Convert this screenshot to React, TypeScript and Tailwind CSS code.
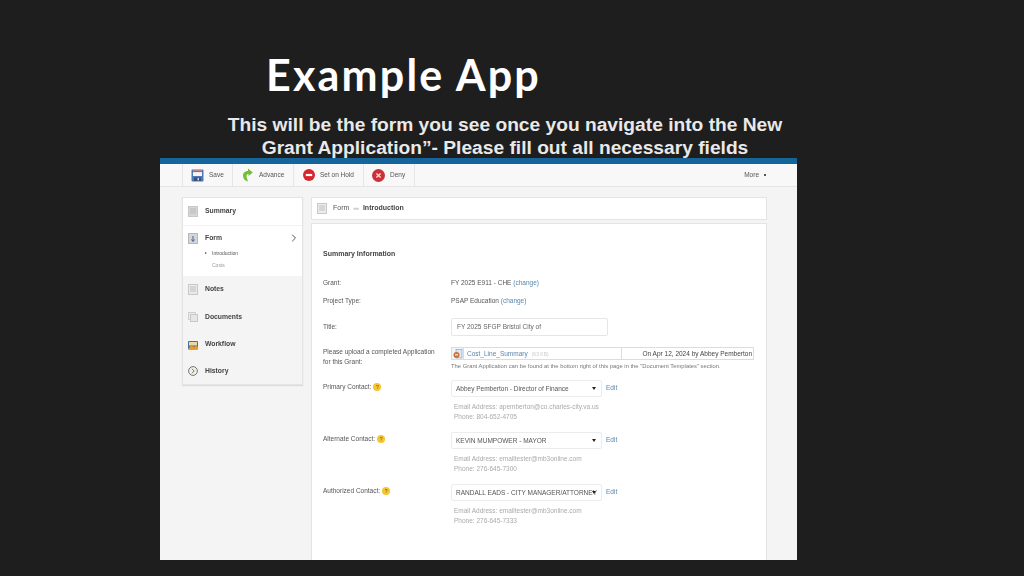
import { ChevronRight } from "lucide-react";

const sans = "font-['Liberation_Sans',Arial,sans-serif]";

function SaveIcon() {
  return (
    <svg width="13" height="13" viewBox="0 0 13 13">
      <rect x="0.5" y="0.5" width="12" height="12" rx="1" fill="#4f78b4" />
      <rect x="2" y="1.5" width="9" height="5.5" fill="#f4f4f4" />
      <rect x="2" y="1.5" width="9" height="1.6" fill="#d9534f" />
      <rect x="3" y="8.5" width="7" height="3.5" fill="#33507f" />
      <rect x="6.5" y="9" width="1.5" height="2.5" fill="#c9d4e4" />
    </svg>
  );
}

function AdvanceIcon() {
  return (
    <svg width="11" height="14" viewBox="0 0 11 14">
      <path d="M6 0.5 L10.8 4.5 L6.5 8 L6.5 6 C4.5 6 4 8 5 10.5 L6 13.5 C3 13 1 10.5 1 7.5 C1 4.5 3.5 3 6 3 Z" fill="#74bd38" />
    </svg>
  );
}

function HoldIcon() {
  return (
    <svg width="12" height="12" viewBox="0 0 12 12">
      <circle cx="6" cy="6" r="6" fill="#d8262c" />
      <rect x="2.8" y="4.9" width="6.4" height="2.2" fill="#fff" />
    </svg>
  );
}

function DenyIcon() {
  return (
    <svg width="13" height="13" viewBox="0 0 13 13">
      <circle cx="6.5" cy="6.5" r="6.5" fill="#cf3038" />
      <path d="M4.4 4.4 L8.6 8.6 M8.6 4.4 L4.4 8.6" stroke="#f6dada" strokeWidth="1.4" />
    </svg>
  );
}

function PageIcon({ tone = "#d6d6d6" }: { tone?: string }) {
  return (
    <svg width="10" height="11" viewBox="0 0 10 11">
      <rect x="0.5" y="0.5" width="9" height="10" fill={tone} stroke="#c8c8c8" />
      <path d="M2 3 H8 M2 5 H8 M2 7 H8" stroke="#b0b0b0" strokeWidth="0.7" />
    </svg>
  );
}

function FormIcon() {
  return (
    <svg width="10" height="11" viewBox="0 0 10 11">
      <rect x="0.5" y="0.5" width="9" height="10" fill="#d4d6dc" stroke="#b5b7bf" />
      <path d="M5 3 V8 M3.5 6.5 L5 8.5 L6.5 6.5" stroke="#4a5f8f" strokeWidth="1" fill="none" />
    </svg>
  );
}

function DocsIcon() {
  return (
    <svg width="10" height="10" viewBox="0 0 10 10">
      <rect x="0.5" y="0.5" width="7" height="7" fill="#ececec" stroke="#cfcfcf" />
      <rect x="2.5" y="2.5" width="7" height="7" fill="#e6e6e6" stroke="#c8c8c8" />
    </svg>
  );
}

function WorkflowIcon() {
  return (
    <svg width="10" height="10" viewBox="0 0 10 10">
      <rect x="0" y="1" width="10" height="8.5" rx="1" fill="#4a6fa0" />
      <rect x="1" y="2" width="8" height="3.5" fill="#e8d9a8" />
      <path d="M0 9.5 L3 5 L6 7 L8 5.5 L10 7 V9.5 Z" fill="#e39a2d" />
    </svg>
  );
}

function HistoryIcon() {
  return (
    <svg width="10" height="10" viewBox="0 0 10 10">
      <circle cx="5" cy="5" r="4.4" fill="#eee" stroke="#77776b" strokeWidth="1" />
      <path d="M4 2.8 L6.2 5 L4 7.2" fill="none" stroke="#8a7a3a" strokeWidth="1" />
    </svg>
  );
}

function FileIcon() {
  return (
    <svg width="10" height="10" viewBox="0 0 10 10">
      <rect x="3" y="0.5" width="6" height="8.5" fill="#dfe7f2" stroke="#7f9bc4" strokeWidth="0.6" />
      <circle cx="3.5" cy="6" r="3" fill="#c9713c" />
      <rect x="2" y="5" width="3" height="1.5" fill="#f0d8c4" />
    </svg>
  );
}

function Hint({ n }: { n: string }) {
  return (
    <span className="ml-[2px] flex size-[8px] items-center justify-center rounded-full bg-[#f7c531] text-[5px] leading-none text-[#6b5210]">
      {n}
    </span>
  );
}

function ToolItem({ icon, label, width }: { icon: React.ReactNode; label: string; width: string }) {
  return (
    <div className={`flex h-full items-center border-r border-[#e6e6e6] pl-[8px] ${width}`}>
      <span className="flex w-[13px] justify-center">{icon}</span>
      <span className="ml-[5px] text-[6.5px] text-[#555]">{label}</span>
    </div>
  );
}

function SideRow({ icon, label, className }: { icon: React.ReactNode; label: string; className: string }) {
  return (
    <div className={`flex items-center pl-[5px] ${className}`}>
      <span className="flex w-[10px] justify-center">{icon}</span>
      <span className="ml-[7px] text-[6.8px] font-bold text-[#444]">{label}</span>
    </div>
  );
}

function Contact({
  label,
  hint,
  selected,
  email,
  phone,
  className,
}: {
  label: string;
  hint: string;
  selected: string;
  email: string;
  phone: string;
  className: string;
}) {
  return (
    <div className={`flex ${className}`}>
      <div className="mt-[1px] flex h-[12px] w-[128px] items-center text-[#555]">
        {label}
        <Hint n={hint} />
      </div>
      <div>
        <div className="flex items-center">
          <div className="flex h-[17px] w-[151px] items-center justify-between rounded-[2px] border border-[#ececec] bg-white pl-[4px] pr-[5px] text-[#555]">
            <span className="whitespace-nowrap">{selected}</span>
            <span className="ml-[-6px] h-0 w-0 border-x-[2.5px] border-t-[3px] border-x-transparent border-t-[#222]" />
          </div>
          <span className="ml-[4px] mt-[-1px] text-[#5a86ad]">Edit</span>
        </div>
        <div className="ml-[3px] mt-[5px] text-[#aaa]">Email Address: {email}</div>
        <div className="ml-[3px] text-[#aaa]">Phone: {phone}</div>
      </div>
    </div>
  );
}

export default function App() {
  return (
    <div className={`flex h-[576px] w-[1024px] flex-col overflow-hidden bg-[#1e1e1f] pb-[16px] pl-[160px] ${sans}`}>
      <div className="h-[158px] shrink-0 pt-[50px]">
        <h1 className="ml-[106px] font-['Lato',sans-serif] text-[43px] font-bold leading-[50px] tracking-[2.2px] text-white">
          Example App
        </h1>
        <p className="ml-[48px] mt-[13px] w-[594px] whitespace-nowrap text-center text-[19.2px] font-bold leading-[23px] text-[#e9e9e9]">
          This will be the form you see once you navigate into the New
          <br />
          Grant Application”- Please fill out all necessary fields
        </p>
      </div>

      <div className="relative flex w-[637px] flex-1 flex-col overflow-hidden bg-[#f4f4f4] blur-[0.4px]">
        <div className="h-[6px] shrink-0 bg-[#14659b]" />

        <div className="flex h-[23px] shrink-0 items-center border-b border-[#e5e5e5] bg-[#f8f8f8] pl-[22px] pr-[31px]">
          <div className="flex h-full border-l border-[#e6e6e6]">
            <ToolItem icon={<SaveIcon />} label="Save" width="w-[50px]" />
            <ToolItem icon={<AdvanceIcon />} label="Advance" width="w-[61px]" />
            <ToolItem icon={<HoldIcon />} label="Set on Hold" width="w-[70px]" />
            <ToolItem icon={<DenyIcon />} label="Deny" width="w-[51px]" />
          </div>
          <div className="ml-auto flex items-center text-[6.5px] text-[#555]">
            More
            <span className="ml-[5px] size-[2px] bg-[#555]" />
          </div>
        </div>

        <div className="flex flex-1 gap-[8px] overflow-hidden pl-[22px] pt-[10px]">
          <div className="h-[188px] w-[121px] shrink-0 self-start border border-[#e4e4e4] shadow-[0_1px_1px_#ddd]">
            <SideRow icon={<PageIcon />} label="Summary" className="h-[27px] bg-white" />
            <div className="h-[51px] border-t border-[#f2f2f2] bg-white">
              <div className="flex h-[24px] items-center pl-[5px] pr-[2px]">
                <span className="flex w-[10px] justify-center">
                  <FormIcon />
                </span>
                <span className="ml-[7px] text-[6.8px] font-bold text-[#444]">Form</span>
                <ChevronRight className="ml-auto size-[12px] text-[#555]" strokeWidth={2} />
              </div>
              <div className="flex items-center pl-[22px] text-[5px] leading-[6px] text-[#555]">
                <span className="mr-[5px] text-[4px]">▸</span>Introduction
              </div>
              <div className="mt-[6px] pl-[29px] text-[5px] leading-[6px] text-[#999]">Costs</div>
            </div>
            <div className="flex h-[108px] flex-col justify-start bg-[#f4f4f4]">
              <SideRow icon={<PageIcon tone="#eaeaea" />} label="Notes" className="h-[27px]" />
              <SideRow icon={<DocsIcon />} label="Documents" className="h-[28px]" />
              <SideRow icon={<WorkflowIcon />} label="Workflow" className="h-[27px]" />
              <SideRow icon={<HistoryIcon />} label="History" className="h-[26px]" />
            </div>
          </div>

          <div className="flex w-[456px] shrink-0 flex-col gap-[3px]">
            <div className="flex h-[23px] shrink-0 items-center border border-[#e4e4e4] bg-white pl-[5px] text-[7px] text-[#555]">
              <PageIcon tone="#ececec" />
              <span className="ml-[6px]">Form</span>
              <span className="mx-[4px] text-[5px] text-[#999]">»»</span>
              <span className="font-bold text-[#444]">Introduction</span>
            </div>

            <div className="flex-1 border-x border-t border-[#e4e4e4] bg-white pl-[11px] pt-[25px] text-[6.5px] leading-[10px] text-[#555]">
              <div className="text-[7px] font-bold text-[#444]">Summary Information</div>

              <div className="mt-[19px] flex">
                <div className="w-[128px]">Grant:</div>
                <div>
                  FY 2025 E911 - CHE <span className="text-[#5a86ad]">(change)</span>
                </div>
              </div>
              <div className="mt-[8px] flex">
                <div className="w-[128px]">Project Type:</div>
                <div>
                  PSAP Education <span className="text-[#5a86ad]">(change)</span>
                </div>
              </div>

              <div className="mt-[12px] flex items-center">
                <div className="w-[128px]">Title:</div>
                <div className="flex h-[18px] w-[157px] items-center rounded-[2px] border border-[#e6e6e6] pl-[5px] text-[#666]">
                  FY 2025 SFGP Bristol City of
                </div>
              </div>

              <div className="mt-[11px] flex">
                <div className="w-[128px]">
                  Please upload a completed Application
                  <br />
                  for this Grant:
                </div>
                <div>
                  <div className="flex h-[13px] w-[303px] items-center border border-[#dcdcdc]">
                    <span className="flex h-full w-[12px] items-center justify-center border-r border-[#dcdcdc] bg-[#f1f5fa]">
                      <FileIcon />
                    </span>
                    <span className="ml-[3px] text-[#5a86ad]">Cost_Line_Summary</span>
                    <span className="ml-[4px] text-[5px] text-[#ccc]">(63 KB)</span>
                    <span className="ml-auto flex h-full w-[132px] items-center justify-end border-l border-[#dcdcdc] pr-[1px] text-[#444]">
                      On Apr 12, 2024 by Abbey Pemberton
                    </span>
                  </div>
                  <div className="mt-[2px] whitespace-nowrap text-[5.84px] leading-[8px] text-[#777]">
                    The Grant Application can be found at the bottom right of this page in the "Document Templates" section.
                  </div>
                </div>
              </div>

              <Contact
                className="mt-[10px]"
                label="Primary Contact:"
                hint="?"
                selected="Abbey Pemberton - Director of Finance"
                email="apemberton@co.charles-city.va.us"
                phone="804-652-4705"
              />
              <Contact
                className="mt-[10px]"
                label="Alternate Contact:"
                hint="?"
                selected="KEVIN MUMPOWER - MAYOR"
                email="emailtester@mb3online.com"
                phone="276-645-7300"
              />
              <Contact
                className="mt-[10px]"
                label="Authorized Contact:"
                hint="?"
                selected="RANDALL EADS - CITY MANAGER/ATTORNEY"
                email="emailtester@mb3online.com"
                phone="276-645-7333"
              />
            </div>
          </div>
        </div>
      </div>
    </div>
  );
}
